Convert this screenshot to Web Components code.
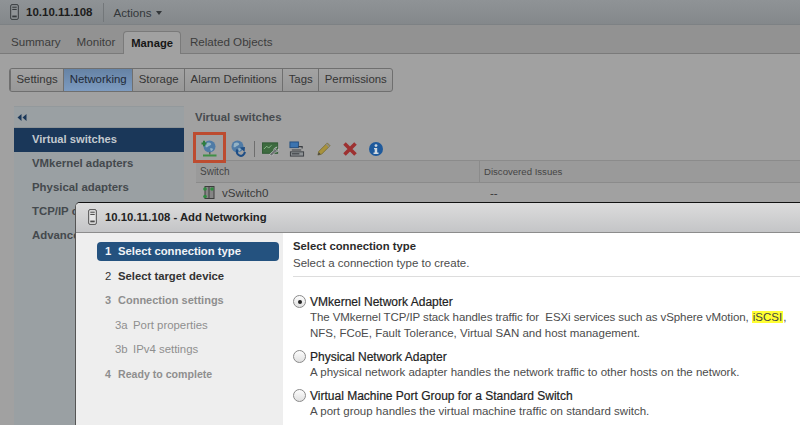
<!DOCTYPE html>
<html>
<head>
<meta charset="utf-8">
<style>
  html, body { margin: 0; padding: 0; }
  body { width: 800px; height: 425px; overflow: hidden; position: relative; background: #a1a1a1; font-family: "Liberation Sans", Arial, sans-serif; }
</style>
</head>
<body>
<vm-app></vm-app>
<vm-wizard></vm-wizard>
<script>
const hostIcon = (w, h, stroke, fill) => `
  <svg width="${w}" height="${h}" viewBox="0 0 10 18">
    <rect x="0.7" y="0.7" width="8.6" height="16.6" rx="1.5" fill="${fill}" stroke="${stroke}" stroke-width="1.1"/>
    <rect x="2.5" y="3" width="5" height="1.2" fill="${stroke}"/>
    <rect x="2.5" y="5.5" width="5" height="1.2" fill="${stroke}"/>
    <rect x="2.5" y="13" width="5" height="2" fill="${stroke}"/>
  </svg>`;

class VmHeader extends HTMLElement {
  constructor() {
    super();
    this.attachShadow({ mode: "open" });
  }
  connectedCallback() {
    this.shadowRoot.innerHTML = `
      <style>
        :host { display: flex; align-items: center; height: 25px; box-sizing: border-box; padding-left: 10px; border-bottom: 1px solid #7d8184;
          background: linear-gradient(#8f9396, #84888b); color: #222; font-size: 11.6px; }
        svg { display: block; margin-right: 7px; }
        b { font-size: 11.5px; color: #1c1c1c; }
        .sep { width: 1px; height: 19px; background: #73777a; margin: 0 10px 0 10px; }
        .act { color: #33373a; }
        .caret { width: 0; height: 0; border: 3.5px solid transparent; border-top: 4px solid #33373a; border-bottom: 0; margin-left: 4px; margin-top: 1px; }
      </style>
      ${hostIcon(9, 16, "#35393c", "#8f9396")}
      <b>10.10.11.108</b>
      <span class="sep"></span>
      <span class="act">Actions</span>
      <span class="caret"></span>
    `;
  }
}

class VmTabs extends HTMLElement {
  constructor() {
    super();
    this.attachShadow({ mode: "open" });
  }
  connectedCallback() {
    this.shadowRoot.innerHTML = `
      <style>
        :host { display: flex; height: 29px; box-sizing: border-box; padding: 6px 0 0 4px; background: #929292; border-bottom: 1px solid #7a7a7a; font-size: 11.6px; line-height: 14px; color: #3c3c3c; }
        span { padding: 4px 7px 0; margin-right: 2px; }
        .on { background: #a1a1a1; border: 1px solid #7a7a7a; border-bottom: 0; border-radius: 4px 4px 0 0; height: 23px; padding: 4px 7px 0; margin: 0 2px 0 -1px; box-sizing: border-box; font-weight: bold; font-size: 11.2px; color: #161616; }
      </style>
      <span>Summary</span>
      <span>Monitor</span>
      <span class="on">Manage</span>
      <span>Related Objects</span>
    `;
  }
}

class VmSubtabs extends HTMLElement {
  constructor() {
    super();
    this.attachShadow({ mode: "open" });
  }
  connectedCallback() {
    this.shadowRoot.innerHTML = `
      <style>
        :host { display: inline-flex; margin: 14px 0 0 9px; height: 24px; box-sizing: border-box; border: 1px solid #6f6f6f; border-radius: 3px; background: linear-gradient(#a3a3a3, #989898); font-size: 11.4px; line-height: 14px; color: #343434; overflow: hidden; }
        span { padding: 3px 5.5px 0 5.5px; border-left: 1px solid #6f6f6f; }
        span:first-child { border-left: 0; padding-left: 6px; }
        .on { background: linear-gradient(#6683a5, #7d9bc0); color: #1f2a38; }
      </style>
      <span>Settings</span>
      <span class="on">Networking</span>
      <span>Storage</span>
      <span>Alarm Definitions</span>
      <span>Tags</span>
      <span>Permissions</span>
    `;
  }
}

class VmSidebar extends HTMLElement {
  constructor() {
    super();
    this.attachShadow({ mode: "open" });
  }
  connectedCallback() {
    this.shadowRoot.innerHTML = `
      <style>
        :host { display: block; width: 170px; height: 320px; background: #9aa0a3; font-size: 11.4px; line-height: 14px; font-weight: bold; color: #44494d; flex: none; }
        .top { height: 22px; display: flex; align-items: center; padding-left: 3px; border-top: 1px solid #93999c; border-bottom: 1px solid #8d9396; box-sizing: border-box; }
        .row { height: 24px; padding: 4px 0 0 18px; box-sizing: border-box; white-space: nowrap; overflow: hidden; }
        .on { background: #1a3759; color: #c3c9cf; font-size: 11.2px; }
      </style>
      <div class="top"><svg width="10" height="7" viewBox="0 0 10 7"><path d="M4.5 0v7L0.5 3.500zM9.500 0v7L5.500 3.500z" fill="#1a3759"/></svg></div>
      <div class="row on">Virtual switches</div>
      <div class="row">VMkernel adapters</div>
      <div class="row">Physical adapters</div>
      <div class="row">TCP/IP c</div>
      <div class="row">Advance</div>
    `;
  }
}

class VmToolbar extends HTMLElement {
  constructor() {
    super();
    this.attachShadow({ mode: "open" });
  }
  connectedCallback() {
    const globe = `<circle cx="9.500" cy="7.500" r="6" fill="#4f7ba6"/><path d="M6 4.500c2-1.500 4-1 5 0s-1 2-2 2.500-2 2-3.500 1zM10 9.500c1.500-.5 3 0 3 1l-2 2z" fill="#93b2c4"/>`;
    this.shadowRoot.innerHTML = `
      <style>
        :host { display: flex; align-items: center; height: 31px; margin: 2px 0 -3px -2px; position: relative; z-index: 1; }
        svg { display: block; flex: none; margin-top: 3px; }
        .red { box-sizing: border-box; width: 33px; height: 31px; border: 3px solid #bd4c30; display: flex; align-items: center; justify-content: center; flex: none; }
        .sep { width: 1px; height: 16px; background: #6e6e6e; margin: 3px 7px 0 6px; flex: none; }
      </style>
      <div class="red">
        <svg width="20" height="20" viewBox="0 0 20 20">
          ${globe}
          <path d="M1.500 3.500h5v2h-5zM3 1.800h2v5.400h-2z" fill="#2f7d3f"/>
          <path d="M9 13h1.500v2.500H9z" fill="#5a5f62"/>
          <rect x="3" y="15.500" width="13.500" height="2" fill="#3f8f45"/>
        </svg>
      </div>
      <svg width="20" height="20" viewBox="0 0 20 20" style="margin-left:2px">
        ${globe}
        <path d="M10.500 9.500a4 4 0 1 0 7.300 2.500" fill="none" stroke="#1d4d85" stroke-width="2.200" transform="translate(-1 1)"/>
        <path d="M12 8.500l5-.5-.5 5z" fill="#1d4d85"/>
      </svg>
      <span class="sep"></span>
      <svg width="18" height="17" viewBox="0 0 19 17">
        <rect x="0.500" y="1.500" width="16" height="11" fill="#3d6b3f" stroke="#2f5a33"/>
        <path d="M2 8l3-3 2 2 3-3" fill="none" stroke="#8fbb8f"/>
        <path d="M16 6l-2 2 1.500 1.500 2-1.500c.5 2-1.500 3.500-3 3L10 15.500 8 13.500l4.500-4c-.5-2 1.500-3.500 3.500-3.500z" fill="#6b6f72" stroke="#dcdcdc" stroke-width=".6"/>
      </svg>
      <svg width="16" height="17" viewBox="0 0 17 17" style="margin-left:9px">
        <rect x="1" y="0.500" width="9" height="6" fill="#3c74b0" stroke="#244f80"/>
        <rect x="1.500" y="11" width="14" height="4.500" fill="#8e9295" stroke="#3a3e42"/>
        <path d="M3 9h10M10 5.500h4v2" fill="none" stroke="#3a3e42" stroke-width="1.200"/>
        <rect x="3" y="12.500" width="8" height="1.200" fill="#3a3e42"/>
      </svg>
      <svg width="15" height="16" viewBox="0 0 16 17" style="margin-left:11px">
        <path d="M2 15l1-4L12 2l3 3-9 9z" fill="#a8923c" stroke="#6b6331" stroke-width=".7"/>
        <path d="M11 3l3 3" stroke="#8c8c8c" stroke-width="1.500"/>
        <path d="M2 15l1-3 2 2z" fill="#444"/>
      </svg>
      <svg width="14" height="14" viewBox="0 0 14 14" style="margin-left:12px">
        <path d="M1.500 1.500l11 11M12.500 1.500l-11 11" stroke="#9d3131" stroke-width="3.600"/>
      </svg>
      <svg width="14" height="14" viewBox="0 0 14 14" style="margin-left:12px">
        <circle cx="7" cy="7" r="7" fill="#1f5a9c"/>
        <circle cx="7" cy="3.600" r="1.400" fill="#cfd8e0"/>
        <path d="M5 6h3.200v4.500H9.500V12h-5v-1.500h1.200V7.300H5z" fill="#cfd8e0"/>
      </svg>
    `;
  }
}

class VmSwitches extends HTMLElement {
  constructor() {
    super();
    this.attachShadow({ mode: "open" });
  }
  connectedCallback() {
    this.shadowRoot.innerHTML = `
      <style>
        :host { display: block; flex: 1; margin-left: 11px; font-size: 11.6px; line-height: 14px; color: #3a3a3a; }
        h2 { margin: 0; height: 24px; padding-top: 4px; box-sizing: border-box; font-size: 11.4px; line-height: 14px; font-weight: bold; color: #474b4f; background: #a1a1a1; }
        .grid { margin-left: 1px; border-top: 1px solid #8b8b8b; }
        .head { display: grid; grid-template-columns: 283px 1fr; height: 21px; background: #9a9a9a; border-bottom: 1px solid #8b8b8b; font-size: 10px; color: #454545; }
        .head span { padding: 4px 0 0 4px; }
        .head span + span { border-left: 1px solid #8b8b8b; font-size: 9.6px; }
        .body { display: grid; grid-template-columns: 283px 1fr; padding-top: 2px; }
        .body > div { padding-left: 6px; display: flex; align-items: center; gap: 6px; }
        .body > div + div { padding-left: 11px; }
        svg { display: block; }
      </style>
      <h2>Virtual switches</h2>
      <vm-toolbar></vm-toolbar>
      <div class="grid">
        <div class="head"><span>Switch</span><span>Discovered Issues</span></div>
        <div class="body">
          <div>
            <svg width="14" height="15" viewBox="0 0 14 15">
              <rect x="3" y="1.500" width="9" height="12" fill="#858585" stroke="#3c3c3c"/>
              <path d="M7 1.500v12" stroke="#3c3c3c"/>
              <circle cx="3" cy="4" r="1.800" fill="#2f8a3f"/><circle cx="10" cy="4" r="1.800" fill="#2f8a3f"/><circle cx="3" cy="11.500" r="1.800" fill="#2f8a3f"/>
            </svg>
            <span>vSwitch0</span>
          </div>
          <div>--</div>
        </div>
      </div>
    `;
  }
}

class VmApp extends HTMLElement {
  constructor() {
    super();
    this.attachShadow({ mode: "open" });
  }
  connectedCallback() {
    this.shadowRoot.innerHTML = `
      <style>
        :host { display: block; }
        .main { display: flex; margin: 14px 0 0 14px; }
      </style>
      <vm-header></vm-header>
      <vm-tabs></vm-tabs>
      <vm-subtabs></vm-subtabs>
      <div class="main">
        <vm-sidebar></vm-sidebar>
        <vm-switches></vm-switches>
      </div>
    `;
  }
}

class WizardStep extends HTMLElement {
  constructor() {
    super();
    this.attachShadow({ mode: "open" });
  }
  connectedCallback() {
    const kind = this.getAttribute("kind") || "";
    const num = this.getAttribute("num");
    const colors = { on: "#f1f4f7", next: "#333", off: "#8e8e8e", sub: "#8e8e8e" };
    const sub = kind === "sub";
    const size = { on: 11.3, next: 11.3, off: 11, sub: 11.4 }[kind];
    this.shadowRoot.innerHTML = `
      <style>
        :host { display: flex; align-items: center; height: ${kind === "on" ? 19 : 24.5}px; box-sizing: border-box; padding-bottom: 1px; font-size: ${size}px;
          font-weight: ${sub ? "normal" : "bold"}; color: ${colors[kind]};
          padding-left: ${sub ? 18 : 8}px; border-radius: 4px;
          ${kind === "on" ? "background: #24527f; margin-bottom: 3px;" : ""} }
        .n { font-weight: ${kind === "on" || kind === "off" ? "bold" : "normal"}; width: ${sub ? 18 : 13}px; flex: none; }
      </style>
      <span class="n">${num}</span><slot></slot>
    `;
  }
}

class ConnOption extends HTMLElement {
  constructor() {
    super();
    this.attachShadow({ mode: "open" });
  }
  connectedCallback() {
    const on = this.hasAttribute("checked");
    this.shadowRoot.innerHTML = `
      <style>
        :host { display: grid; grid-template-columns: 17px 1fr; font-size: 11.5px; line-height: 16px; }
        .radio { width: 11px; height: 11px; margin-top: 2px; border: 1px solid #8a8a8a; border-radius: 50%; background: linear-gradient(#fdfdfd, #e0e0e0); display: flex; align-items: center; justify-content: center; }
        .radio i { width: 4px; height: 4px; border-radius: 50%; background: #222; }
        .t { color: #222; font-size: 12px; line-height: 14px; padding-top: 2px; -webkit-text-stroke: .2px #222; }
        .d { color: #4c4c4c; grid-column: 2; white-space: nowrap; }
      </style>
      <div class="radio">${on ? "<i></i>" : ""}</div>
      <div class="t">${this.getAttribute("label")}</div>
      <div class="d"><slot></slot></div>
    `;
  }
}

class VmWizard extends HTMLElement {
  constructor() {
    super();
    this.attachShadow({ mode: "open" });
  }
  connectedCallback() {
    this.shadowRoot.innerHTML = `
      <style>
        :host { position: absolute; left: 75px; top: 202px; width: 725px; height: 223px; box-sizing: border-box; border-top: 1px solid #111; border-left: 1px solid #555; border-top-left-radius: 5px; background: #fff; overflow: hidden; }
        .title { display: flex; align-items: center; height: 30px; box-sizing: border-box; padding: 0 0 1px 12px; background: linear-gradient(#dcdcdc, #c4c5c7); border-bottom: 1px solid #8c8c8c; font-size: 11.3px; color: #222; }
        .title svg { display: block; margin-right: 8px; }
        .cols { display: flex; height: 192px; }
        nav { width: 207px; box-sizing: border-box; background: #eee; padding: 9px 4px 0 21px; flex: none; }
        section { padding: 6px 0 0 10px; flex: 1; }
        h3 { margin: 0; font-size: 11.3px; line-height: 15px; color: #2b2b2b; }
        .lead { font-size: 11.5px; line-height: 18px; color: #4c4c4c; padding: 0 0 4px 0; border-bottom: 1px solid #ddd; }
        .opts { display: flex; flex-direction: column; gap: 7px; padding-top: 16px; }
        mark { background: #ffff33; color: #444; padding: 0 1px; }
        .tight { letter-spacing: -.08px; }
      </style>
      <div class="title">${hostIcon(9, 16, "#4a4a4a", "#e6e6e6")}<b>10.10.11.108 - Add Networking</b></div>
      <div class="cols">
        <nav>
          <wizard-step kind="on" num="1">Select connection type</wizard-step>
          <wizard-step kind="next" num="2">Select target device</wizard-step>
          <wizard-step kind="off" num="3">Connection settings</wizard-step>
          <wizard-step kind="sub" num="3a">Port properties</wizard-step>
          <wizard-step kind="sub" num="3b">IPv4 settings</wizard-step>
          <wizard-step kind="off" num="4" style="font-size: 10.6px">Ready to complete</wizard-step>
        </nav>
        <section>
          <h3>Select connection type</h3>
          <div class="lead">Select a connection type to create.</div>
          <div class="opts">
            <conn-option checked label="VMkernel Network Adapter"><span class="tight">The VMkernel TCP/IP stack handles traffic for &nbsp;ESXi services such as vSphere vMotion, </span><mark>iSCSI</mark>,<br>NFS, FCoE, Fault Tolerance, Virtual SAN and host management.</conn-option>
            <conn-option label="Physical Network Adapter">A physical network adapter handles the network traffic to other hosts on the network.</conn-option>
            <conn-option label="Virtual Machine Port Group for a Standard Switch">A port group handles the virtual machine traffic on standard switch.</conn-option>
          </div>
        </section>
      </div>
    `;
  }
}

customElements.define("vm-header", VmHeader);
customElements.define("vm-tabs", VmTabs);
customElements.define("vm-subtabs", VmSubtabs);
customElements.define("vm-sidebar", VmSidebar);
customElements.define("vm-toolbar", VmToolbar);
customElements.define("vm-switches", VmSwitches);
customElements.define("vm-app", VmApp);
customElements.define("wizard-step", WizardStep);
customElements.define("conn-option", ConnOption);
customElements.define("vm-wizard", VmWizard);
</script>
</body>
</html>
